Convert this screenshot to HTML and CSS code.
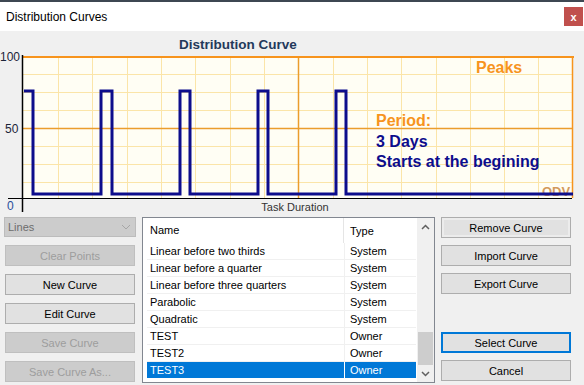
FILE: index.html
```html
<!DOCTYPE html>
<html lang="en">
<head>
    <meta charset="UTF-8">
    <title>Distribution Curves</title>
    <link rel="stylesheet" href="styles.css">
</head>
<body>
    <div class="topstrip"></div>
    <div class="titlebar">
        <span>Distribution Curves</span>
        <div class="close">x</div>
    </div>

    <div class="dialog">
        <!-- chart canvas, coordinates are page coordinates (viewBox starts at y=31) -->
        <svg class="chart" width="584" height="183" viewBox="0 31 584 183">
            <text class="chart-title" x="238" y="49" text-anchor="middle">Distribution Curve</text>

            <rect x="23" y="57" width="549" height="141" fill="#fffef4"/>
            <g stroke="#fbe5a8" stroke-width="1">
                <line x1="58.5" y1="57" x2="58.5" y2="198"/>
                <line x1="92.5" y1="57" x2="92.5" y2="198"/>
                <line x1="127.5" y1="57" x2="127.5" y2="198"/>
                <line x1="161.5" y1="57" x2="161.5" y2="198"/>
                <line x1="195.5" y1="57" x2="195.5" y2="198"/>
                <line x1="230.5" y1="57" x2="230.5" y2="198"/>
                <line x1="264.5" y1="57" x2="264.5" y2="198"/>
                <line x1="333.5" y1="57" x2="333.5" y2="198"/>
                <line x1="367.5" y1="57" x2="367.5" y2="198"/>
                <line x1="401.5" y1="57" x2="401.5" y2="198"/>
                <line x1="436.5" y1="57" x2="436.5" y2="198"/>
                <line x1="470.5" y1="57" x2="470.5" y2="198"/>
                <line x1="504.5" y1="57" x2="504.5" y2="198"/>
                <line x1="538.5" y1="57" x2="538.5" y2="198"/>
                <line x1="23" y1="74.5" x2="572" y2="74.5"/>
                <line x1="23" y1="92.5" x2="572" y2="92.5"/>
                <line x1="23" y1="110.5" x2="572" y2="110.5"/>
                <line x1="23" y1="146.5" x2="572" y2="146.5"/>
                <line x1="23" y1="164.5" x2="572" y2="164.5"/>
                <line x1="23" y1="182.5" x2="572" y2="182.5"/>
            </g>
            <g stroke="#eb9d2c" stroke-width="1.5">
                <line x1="298.5" y1="57" x2="298.5" y2="198"/>
                <line x1="23" y1="128.5" x2="572" y2="128.5"/>
            </g>
            <line x1="22" y1="57" x2="574" y2="57" stroke="#f7941d" stroke-width="2"/>
            <line x1="572.5" y1="56" x2="572.5" y2="198" stroke="#f7941d" stroke-width="1.5"/>

            <text class="peaks" x="476" y="73">Peaks</text>
            <text class="peaks" x="376" y="126">Period:</text>
            <text class="info" x="376" y="147">3 Days</text>
            <text class="info" x="376" y="167">Starts at the begining</text>
            <text class="odv" x="542" y="196">ODV</text>

            <polyline fill="none" stroke="#0d0d8c" stroke-width="3"
                points="24,91 33,91 33,194 101,194 101,91 112,91 112,194 180,194 180,91 190,91 190,194 258,194 258,91 268,91 268,194 336,194 336,91 346,91 346,194 573,194"/>

            <line x1="22.5" y1="55" x2="22.5" y2="212" stroke="#000" stroke-width="1.5"/>
            <line x1="8" y1="198.5" x2="572" y2="198.5" stroke="#000" stroke-width="1"/>

            <text class="axis" x="0" y="61">100</text>
            <text class="axis" x="5" y="133">50</text>
            <text class="axis zero" x="7" y="210">0</text>
            <text class="axis-name" x="295" y="211" text-anchor="middle">Task Duration</text>
        </svg>

        <div class="controls">
            <div class="side left">
                <div class="combo">
                    <span>Lines</span>
                    <svg width="10" height="6" viewBox="0 0 10 6"><path d="M1 1 L5 5 L9 1" fill="none" stroke="#a6a6a6" stroke-width="1"/></svg>
                </div>
                <button disabled>Clear Points</button>
                <button>New Curve</button>
                <button>Edit Curve</button>
                <button disabled>Save Curve</button>
                <button disabled>Save Curve As...</button>
            </div>

            <div class="list">
                <div class="list-main">
                    <div class="list-head">
                        <span class="h-name">Name</span>
                        <span class="h-type">Type</span>
                    </div>
                    <div class="rows">
                        <div class="row"><span class="c-name">Linear before two thirds</span><span class="c-type">System</span></div>
                        <div class="row"><span class="c-name">Linear before a quarter</span><span class="c-type">System</span></div>
                        <div class="row"><span class="c-name">Linear before three quarters</span><span class="c-type">System</span></div>
                        <div class="row"><span class="c-name">Parabolic</span><span class="c-type">System</span></div>
                        <div class="row"><span class="c-name">Quadratic</span><span class="c-type">System</span></div>
                        <div class="row"><span class="c-name">TEST</span><span class="c-type">Owner</span></div>
                        <div class="row"><span class="c-name">TEST2</span><span class="c-type">Owner</span></div>
                        <div class="row selected"><span class="c-name">TEST3</span><span class="c-type">Owner</span></div>
                    </div>
                </div>
                <div class="scrollbar">
                    <div class="arrow">
                        <svg width="9" height="6" viewBox="0 0 9 6"><path d="M1 5 L4.5 1.5 L8 5" fill="none" stroke="#606060" stroke-width="1.5"/></svg>
                    </div>
                    <div class="track"><div class="thumb"></div></div>
                    <div class="arrow">
                        <svg width="9" height="6" viewBox="0 0 9 6"><path d="M1 1 L4.5 4.5 L8 1" fill="none" stroke="#606060" stroke-width="1.5"/></svg>
                    </div>
                </div>
            </div>

            <div class="side right">
                <button class="hover">Remove Curve</button>
                <button>Import Curve</button>
                <button>Export Curve</button>
                <button class="default">Select Curve</button>
                <button>Cancel</button>
            </div>
        </div>
    </div>
</body>
</html>
```

FILE: styles.css
```css
body{
    margin: 0;
    width: 584px;
    height: 385px;
    overflow: hidden;
    background: #f0f0f0;
    font-family: "Liberation Sans", Arial, sans-serif;
    font-size: 11px;
    color: #000;
}
.topstrip{
    height: 2px;
    background: #3e4752;
}
.titlebar{
    height: 29px;
    background: #fff;
    display: flex;
    align-items: center;
    justify-content: space-between;
    padding-left: 6px;
    font-size: 12px;
}
.close{
    width: 19px;
    height: 19px;
    margin-right: 1px;
    background: #c0504d;
    color: #fff;
    font-weight: bold;
    font-size: 11px;
    display: flex;
    align-items: center;
    justify-content: center;
}
.chart{
    display: block;
}
.chart text{
    font-family: "Liberation Sans", Arial, sans-serif;
}
.chart-title{
    font-size: 13.5px;
    font-weight: bold;
    fill: #23395b;
}
.peaks{
    font-size: 16px;
    font-weight: bold;
    fill: #f7941d;
}
.info{
    font-size: 16px;
    font-weight: bold;
    fill: #0d0d8c;
}
.odv{
    font-size: 13px;
    font-weight: bold;
    fill: #d39a5c;
}
.axis{
    font-size: 12px;
    fill: #1b2438;
}
.zero{
    fill: #2a4d9a;
}
.axis-name{
    font-size: 11px;
    fill: #333;
}

.controls{
    display: flex;
    height: 171px;
    padding-left: 4px;
}
.side{
    display: flex;
    flex-direction: column;
    gap: 8px;
}
.left{
    width: 132px;
    padding-top: 3px;
}
.left button{
    margin-left: 1px;
    width: 130px;
}
.right{
    width: 130px;
    margin-left: 6px;
    padding-top: 3px;
    gap: 7px;
}
button{
    height: 21px;
    box-sizing: border-box;
    border: 1px solid #adadad;
    background: #e1e1e1;
    font-family: inherit;
    font-size: 11px;
    color: #000;
    padding: 0;
}
button:disabled{
    background: #cccccc;
    border-color: #bfbfbf;
    color: #9d9d9d;
}
button.hover{
    box-shadow: inset 0 0 0 2px #ececec;
}
button.default{
    margin-top: 31px;
    border: 2px solid #0078d7;
}
.combo{
    height: 20px;
    box-sizing: border-box;
    border: 1px solid #bcbcbc;
    background: #cccccc;
    color: #6d6d6d;
    padding: 0 4px 0 3px;
    display: flex;
    align-items: center;
    justify-content: space-between;
}

.list{
    width: 293px;
    height: 166px;
    box-sizing: border-box;
    margin: 3px 0 0 6px;
    border: 1px solid #828790;
    background: #fff;
    display: flex;
}
.list-main{
    width: 274px;
}
.list-head{
    height: 25px;
    display: flex;
    align-items: center;
}
.h-name{
    width: 201px;
    box-sizing: border-box;
    padding-left: 7px;
    border-right: 1px solid #e5e5e5;
    height: 25px;
    line-height: 25px;
}
.h-type{
    padding-left: 6px;
}
.rows{
    padding-left: 4px;
}
.row{
    display: flex;
    height: 17px;
    box-sizing: border-box;
    border-bottom: 1px solid #f0f0f0;
    width: 269px;
    line-height: 17px;
}
.c-name{
    width: 198px;
    box-sizing: border-box;
    padding-left: 3px;
    border-right: 1px solid #f0f0f0;
}
.c-type{
    padding-left: 5px;
    flex: 1;
}
.row.selected{
    border-bottom-color: #fff;
}
.row.selected span{
    background: #0078d7;
    color: #fff;
}
.row.selected .c-name{
    border-right-color: #fff;
}
.scrollbar{
    width: 17px;
    background: #f0f0f0;
    display: flex;
    flex-direction: column;
}
.arrow{
    height: 17px;
    display: flex;
    align-items: center;
    justify-content: center;
}
.track{
    flex: 1;
    display: flex;
    flex-direction: column;
    justify-content: flex-end;
}
.thumb{
    height: 33px;
    margin: 0 1px;
    background: #cdcdcd;
}
```
